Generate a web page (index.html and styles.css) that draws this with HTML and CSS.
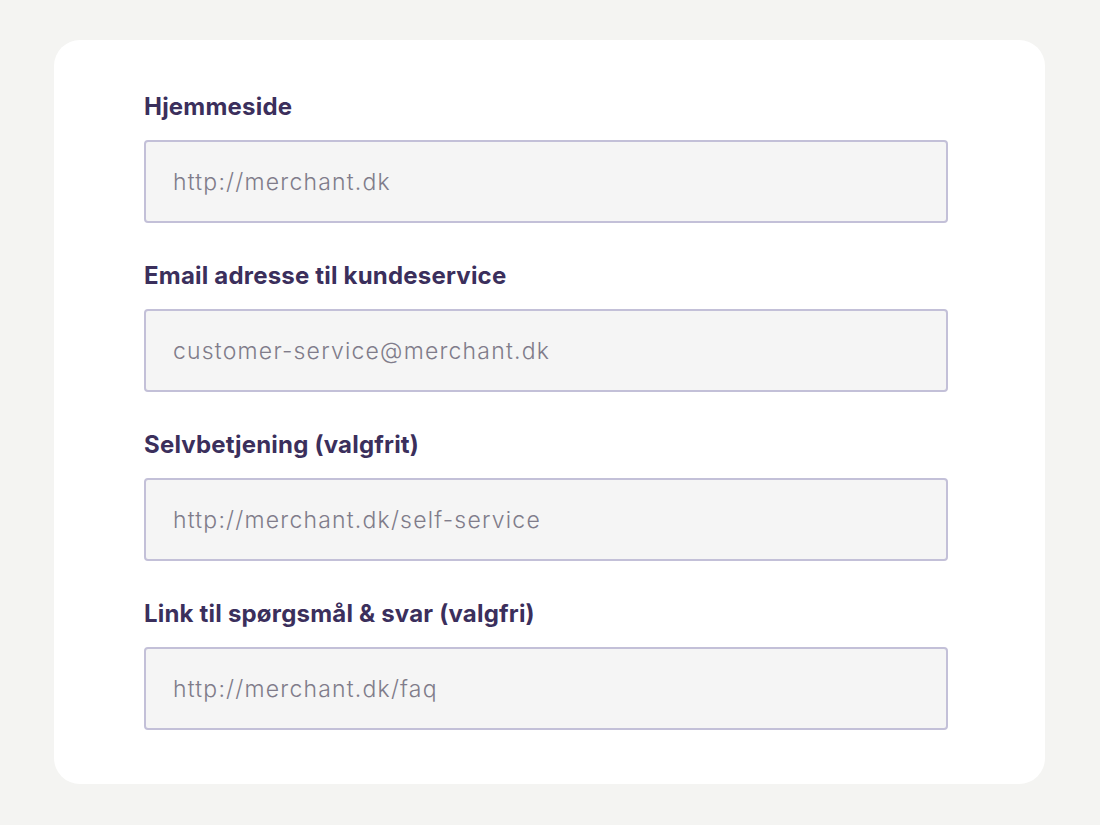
FILE: index.html
```html
<!DOCTYPE html>
<html lang="da">
<head>
<meta charset="utf-8">
<title>Kontaktoplysninger</title>
<link rel="stylesheet" href="styles.css">
</head>
<body>
<div class="card">
  <div class="field">
    <label class="label" for="f1">Hjemmeside</label>
    <input class="input" id="f1" type="text" placeholder="http://merchant.dk">
  </div>
  <div class="field">
    <label class="label" for="f2">Email adresse til kundeservice</label>
    <input class="input" id="f2" type="text" placeholder="customer-service@merchant.dk">
  </div>
  <div class="field">
    <label class="label" for="f3">Selvbetjening (valgfrit)</label>
    <input class="input" id="f3" type="text" placeholder="http://merchant.dk/self-service">
  </div>
  <div class="field">
    <label class="label" for="f4">Link til spørgsmål &amp; svar (valgfri)</label>
    <input class="input" id="f4" type="text" placeholder="http://merchant.dk/faq">
  </div>
</div>
</body>
</html>
```
FILE: styles.css
```css
html, body {
  margin: 0;
  padding: 0;
  background: #f4f4f2;
  width: 1100px;
  height: 825px;
  overflow: hidden;
}
body {
  padding: 40px 55px 0 54px;
  box-sizing: border-box;
  font-family: Inter, "Noto Sans", sans-serif;
}
.card {
  background: #ffffff;
  border-radius: 26px;
  height: 744px;
  box-sizing: border-box;
  padding: 52px 97px 0 90px;
  display: flex;
  flex-direction: column;
  gap: 38px;
}
.field {
  display: flex;
  flex-direction: column;
  gap: 18px;
}
.label {
  font-size: 24px;
  font-weight: 700;
  color: #3b2f5c;
  line-height: 30px;
  letter-spacing: 0.2px;
}
.input {
  width: 804px;
  height: 83px;
  box-sizing: border-box;
  border: 2px solid #c3c0d8;
  border-radius: 4px;
  background: #f5f5f5;
  padding: 0 27px;
  font-family: Inter, "Noto Sans", sans-serif;
  font-size: 23px;
  font-weight: 300;
  letter-spacing: 1.2px;
  color: #7e7a88;
  outline: none;
}
.input::placeholder {
  color: #807c8a;
  opacity: 1;
}
```
